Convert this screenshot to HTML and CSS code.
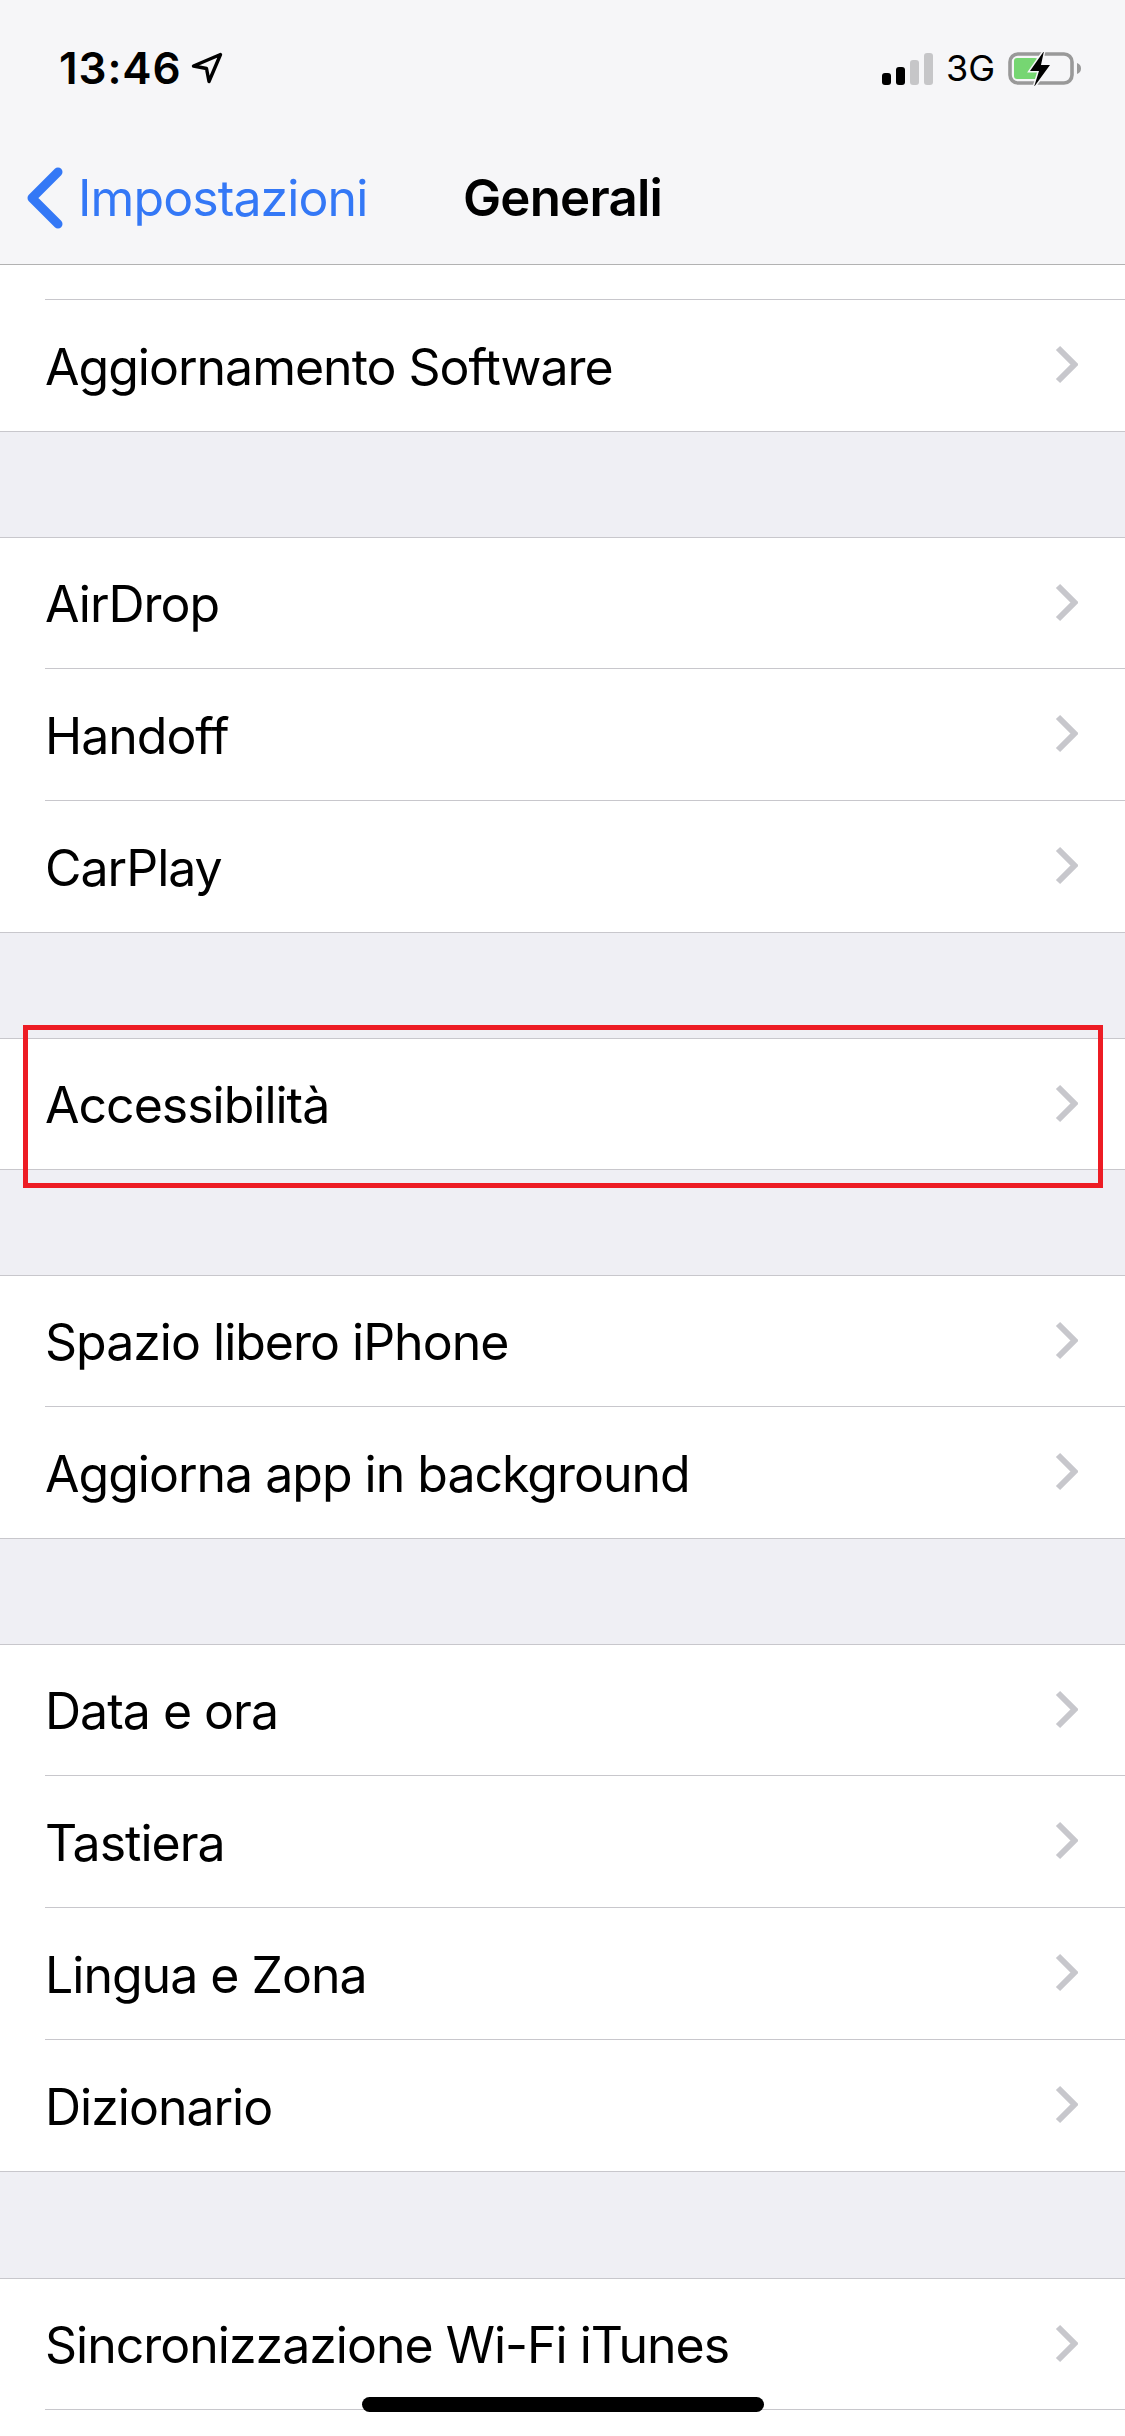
FILE: index.html
```html
<!DOCTYPE html>
<html lang="it">
<head>
    <meta charset="UTF-8">
    <meta name="viewport" content="width=device-width, initial-scale=1.0">
    <title>Generali</title>
    <link rel="stylesheet" href="styles.css">
</head>
<body>
    <svg class="defs" width="0" height="0">
        <symbol id="chevron" viewBox="0 0 23 39">
            <path d="M3 3 L19.500 19.500 L3 36" fill="none" stroke="#c7c7cc" stroke-width="6"/>
        </symbol>
    </svg>

    <header class="header">
        <div class="statusbar">
            <div class="clock">
                <span>13:46</span>
                <svg class="arrow" width="32" height="32" viewBox="0 0 32 32">
                    <path d="M29.500 2.500 L2.500 14 L15.500 16.500 L18 29.500 Z" fill="none" stroke="#000" stroke-width="3.4" stroke-linejoin="round"/>
                </svg>
            </div>
            <div class="indicators">
                <div class="signal">
                    <i class="bar bar1"></i>
                    <i class="bar bar2"></i>
                    <i class="bar bar3 off"></i>
                    <i class="bar bar4 off"></i>
                </div>
                <span class="network">3G</span>
                <svg class="battery" width="74" height="34" viewBox="0 0 74 34">
                    <rect x="2" y="2" width="62" height="29" rx="8" fill="none" stroke="#999" stroke-width="3.6"/>
                    <rect x="6" y="6" width="24" height="21" rx="3" fill="#76d672"/>
                    <path d="M69 11 C72 12 73 14 73 16.500 C73 19 72 21 69 22 Z" fill="#999"/>
                    <path d="M36 -1 L22 19 L31 19 L26 35 L42 13 L33 13 Z" fill="#000" stroke="#f6f6f8" stroke-width="3" paint-order="stroke"/>
                </svg>
            </div>
        </div>
        <nav class="navbar">
            <a class="back" href="#">
                <svg width="38" height="62" viewBox="0 0 38 62">
                    <path d="M32 5 L6 31 L32 57" fill="none" stroke="#3478f6" stroke-width="9" stroke-linecap="round" stroke-linejoin="round"/>
                </svg>
                <span>Impostazioni</span>
            </a>
            <h1 class="title">Generali</h1>
        </nav>
    </header>

    <main class="content">
        <section class="group first">
            <div class="stub"></div>
            <a class="row" href="#"><span>Aggiornamento Software</span><svg class="chev"><use href="#chevron"/></svg></a>
        </section>

        <section class="group">
            <a class="row" href="#"><span>AirDrop</span><svg class="chev"><use href="#chevron"/></svg></a>
            <a class="row" href="#"><span>Handoff</span><svg class="chev"><use href="#chevron"/></svg></a>
            <a class="row" href="#"><span>CarPlay</span><svg class="chev"><use href="#chevron"/></svg></a>
        </section>

        <section class="group">
            <a class="row" href="#"><span>Accessibilità</span><svg class="chev"><use href="#chevron"/></svg></a>
        </section>

        <section class="group">
            <a class="row" href="#"><span>Spazio libero iPhone</span><svg class="chev"><use href="#chevron"/></svg></a>
            <a class="row" href="#"><span>Aggiorna app in background</span><svg class="chev"><use href="#chevron"/></svg></a>
        </section>

        <section class="group">
            <a class="row" href="#"><span>Data e ora</span><svg class="chev"><use href="#chevron"/></svg></a>
            <a class="row" href="#"><span>Tastiera</span><svg class="chev"><use href="#chevron"/></svg></a>
            <a class="row" href="#"><span>Lingua e Zona</span><svg class="chev"><use href="#chevron"/></svg></a>
            <a class="row" href="#"><span>Dizionario</span><svg class="chev"><use href="#chevron"/></svg></a>
        </section>

        <section class="group last">
            <a class="row" href="#"><span>Sincronizzazione Wi-Fi iTunes</span><svg class="chev"><use href="#chevron"/></svg></a>
            <div class="stub"></div>
        </section>
    </main>

    <div class="highlight"></div>
    <div class="home-indicator"></div>
</body>
</html>
```

FILE: styles.css
```css
/* Reset styles */
* {
    margin: 0;
    padding: 0;
    box-sizing: border-box;
}

:root {
    --bg-color: #efeff4;
    --bar-color: #f6f6f8;
    --line-color: #c8c7cc;
    --blue: #3478f6;
}

html, body {
    width: 1125px;
    height: 2436px;
    overflow: hidden;
}

body {
    position: relative;
    background: var(--bg-color);
    color: #000;
    font-family: Inter, "Liberation Sans", sans-serif;
}

.defs {
    position: absolute;
}

a {
    color: inherit;
    text-decoration: none;
}

/* Top bars */
.header {
    height: 265px;
    background: var(--bar-color);
    border-bottom: 1px solid #b2b2b2;
}

.statusbar {
    height: 132px;
    padding: 44px 43px 0 59px;
    display: flex;
    justify-content: space-between;
    align-items: flex-start;
}

.clock {
    display: flex;
    align-items: center;
    gap: 9px;
    font-size: 44px;
    font-weight: 600;
    letter-spacing: 0.9px;
    line-height: 48px;
}

.indicators {
    display: flex;
    align-items: flex-start;
    padding-top: 8px;
}

.signal {
    display: flex;
    align-items: flex-end;
    gap: 5px;
    height: 33px;
    margin-right: 13px;
}

.bar {
    width: 9px;
    background: #000;
    border-radius: 3px;
}

.bar.off {
    background: #c6c6c8;
}

.bar1 { height: 12px; }
.bar2 { height: 18px; }
.bar3 { height: 25px; }
.bar4 { height: 32px; }

.network {
    font-size: 36px;
    line-height: 33px;
    margin-right: 13px;
}

.navbar {
    position: relative;
    height: 132px;
    display: flex;
    justify-content: center;
    align-items: center;
}

.back {
    position: absolute;
    left: 26px;
    top: 0;
    height: 100%;
    display: flex;
    align-items: center;
    gap: 14px;
    color: var(--blue);
    font-size: 50px;
    letter-spacing: -0.9px;
}

.title {
    font-size: 51px;
    font-weight: 600;
    letter-spacing: -0.8px;
    line-height: 60px;
}

/* Settings list */
.group {
    margin-top: 105px;
    background: #fff;
    border-top: 1px solid var(--line-color);
    border-bottom: 1px solid var(--line-color);
}

.group.first {
    margin-top: 0;
    border-top: none;
}

.group.last {
    margin-top: 106px;
    border-bottom: none;
}

.stub {
    height: 35px;
    margin-left: 45px;
    border-bottom: 1px solid var(--line-color);
}

.group.last .stub {
    border-bottom: none;
    height: 40px;
}

.row {
    height: 132px;
    margin-left: 45px;
    padding-right: 47px;
    display: flex;
    justify-content: space-between;
    align-items: center;
    border-bottom: 1px solid var(--line-color);
    font-size: 50px;
    letter-spacing: -1px;
}

.row span {
    margin-top: 2px;
}

/* the group's own top and bottom lines take a pixel off its outer rows */
.row:first-child {
    height: 131px;
}

.row:last-child {
    height: 131px;
    border-bottom: none;
}

.row:only-child {
    height: 130px;
}

.chev {
    width: 23px;
    height: 39px;
    margin-top: -2px;
}

/* Things lying over the page */
.highlight {
    position: absolute;
    left: 23px;
    top: 1025px;
    width: 1080px;
    height: 163px;
    border: 5px solid #ed1c24;
}

.home-indicator {
    position: absolute;
    left: 362px;
    top: 2397px;
    width: 402px;
    height: 15px;
    border-radius: 8px;
    background: #000;
}
```
